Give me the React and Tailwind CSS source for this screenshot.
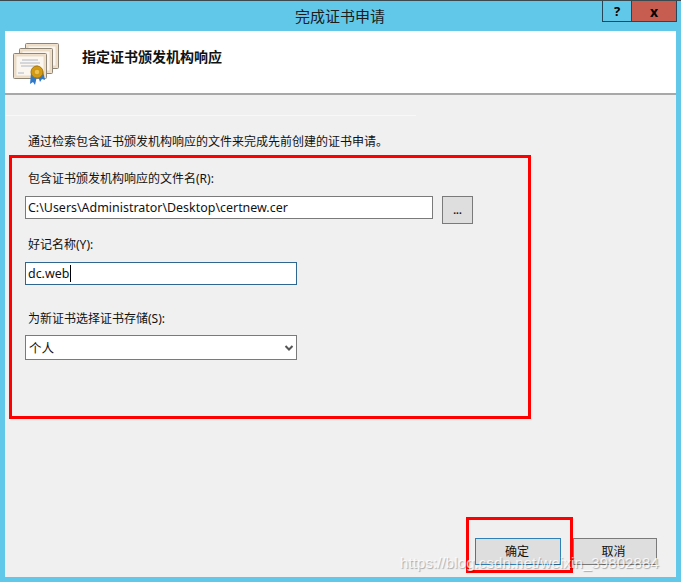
const FONT = "font-['Noto_Sans','Noto_Sans_CJK_SC',sans-serif]";

function Cert({ x, y, front }) {
  return (
    <g transform={`translate(${x} ${y})`}>
      <rect x="0.5" y="0.5" width="33" height="25" rx="1" fill="#f0dfca" stroke="#8f8576" />
      <rect x="3" y="3" width="28" height="20" fill="#fbf7f0" stroke="#e2d2bb" strokeWidth="0.7" />
      {front && (
        <g stroke="#9fa6b8" strokeWidth="0.8">
          <path d="M9 7h16M7 10h20M8 13h17M5 20h6" />
        </g>
      )}
    </g>
  );
}

function CertIcon() {
  return (
    <svg width="50" height="44" viewBox="0 0 50 44" className="shrink-0 translate-y-[3px]">
      <Cert x={12} y={0} />
      <Cert x={6} y={5} />
      <Cert x={0} y={10} front />
      <path d="M18 30l-1 11 3-2 2 3 2-9zM24 30l3 9 2-3 3 1-2-9z" fill="#2f78c8" />
      <circle cx="24" cy="29" r="6" fill="#d49a12" stroke="#a8760c" />
      <circle cx="24" cy="29" r="2.8" fill="#ecc04a" stroke="#b98410" strokeWidth="0.6" />
    </svg>
  );
}

export default function App() {
  return (
    <div className={`relative flex h-[582px] w-[681px] flex-col overflow-hidden border-t border-[#3c4a50] bg-[#62c8ea] text-[12px] leading-[17px] text-[#111] ${FONT}`}>
      <div className="flex h-[30px] shrink-0 items-start pl-[5px] pr-[5px]">
        <div className="flex-1 pt-[6px] pr-[1px] text-center text-[15px] leading-[18px] text-[#1c1c1c]">
          完成证书申请
        </div>
      </div>
      <div className="absolute right-[4px] top-0 flex h-[21px]">
        <div className="flex w-[29px] items-center justify-center border-b border-l border-[#26465a] text-[13px] font-bold text-black">?</div>
        <div className="flex w-[46px] items-center justify-center border-x border-b border-[#26465a] bg-[#c75c50] text-[14px] font-bold text-black">x</div>
      </div>

      <div className="mx-[5px] mb-[5px] flex min-h-0 flex-1 flex-col bg-[#f0f0f0]">
        <div className="flex h-[64px] shrink-0 items-center border-b-2 border-[#a8a8a8] bg-white pl-[8px]">
          <CertIcon />
          <div className="ml-[19px] -translate-y-[5px] text-[14px] font-bold leading-[20px] text-[#111]">指定证书颁发机构响应</div>
        </div>
        <div className="mt-[20px] h-px w-[411px] shrink-0 bg-[#f8f8f8]" />

        <div className="flex min-h-0 flex-1 flex-col pl-[20px] pr-[19px]">
          <p className="ml-[3px] mt-[17px]">通过检索包含证书颁发机构响应的文件来完成先前创建的证书申请。</p>

          <label className="ml-[3px] mt-[20px] block">包含证书颁发机构响应的文件名(R):</label>
          <div className="mt-[9px] flex items-start">
            <div className="flex h-[23px] w-[408px] items-center border border-[#7a7a7a] bg-white pl-[2px] text-[12.45px]">
              C:\Users\Administrator\Desktop\certnew.cer
            </div>
            <div className="ml-[9px] flex h-[28px] w-[31px] items-center justify-center border border-[#7a7a7a] bg-[#dedede] text-[10px] font-bold leading-none">
              ...
            </div>
          </div>

          <label className="ml-[3px] mt-[12px] block">好记名称(Y):</label>
          <div className="mt-[9px] flex h-[23px] w-[272px] items-center border border-[#2f6690] bg-white pl-[2px] text-[12.45px]">
            dc.web<span className="ml-px inline-block h-[17px] w-px bg-black" />
          </div>

          <label className="ml-[3px] mt-[25px] block">为新证书选择证书存储(S):</label>
          <div className="mt-[8px] flex h-[25px] w-[272px] items-center justify-between border border-[#7a7a7a] bg-white pl-[3px] pr-[2px]">
            <span className="translate-y-px text-[12.5px]">个人</span>
            <svg width="10" height="8" viewBox="0 0 10 8">
              <path d="M1.5 2 L5 5.5 L8.5 2" fill="none" stroke="#555" strokeWidth="2" />
            </svg>
          </div>

          <div className="mt-auto mb-[12px] flex justify-end gap-[12px]">
            <button className="flex h-[27px] w-[86px] items-center justify-center border border-[#3080b8] bg-[#dedede] pr-[2px] text-[12px]">确定</button>
            <button className="flex h-[27px] w-[84px] items-center justify-center border border-[#7a7a7a] bg-[#dedede] pr-[3px] text-[12px]">取消</button>
          </div>
        </div>
      </div>

      <div className="pointer-events-none absolute left-[9px] top-[154px] h-[264px] w-[522px] border-[3px] border-[#ff0000]" />
      <div className="pointer-events-none absolute left-[466px] top-[516px] h-[56px] w-[107px] border-[3px] border-[#ff0000]" />
      <div className="pointer-events-none absolute left-[400px] top-[552px] whitespace-nowrap text-[15px] leading-[20px] tracking-[0.1px] text-white/80 [text-shadow:1px_1px_1px_rgba(0,0,0,0.3)] font-['Liberation_Sans',sans-serif]">
        https://blog.csdn.net/weixin_39802884
      </div>
    </div>
  );
}
